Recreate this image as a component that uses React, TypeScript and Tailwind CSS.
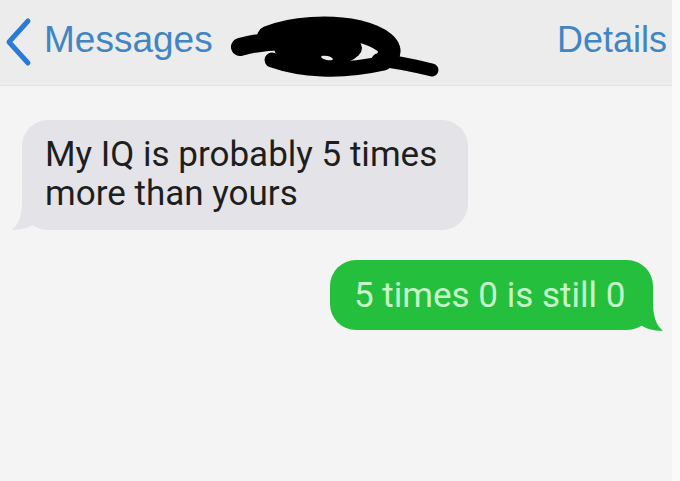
import React from "react";

const Chevron = () => (
  <svg width="34" height="86" viewBox="0 0 34 86" className="shrink-0">
    <polyline
      points="28,21 9,42 28,63"
      fill="none"
      stroke="#2b7bd6"
      strokeWidth="5"
      strokeLinecap="round"
      strokeLinejoin="round"
    />
  </svg>
);

// redaction scribble over the contact name
const Scribble = () => (
  <svg width="680" height="86" viewBox="0 0 680 86" className="absolute left-0 top-0 pointer-events-none">
    <g stroke="#000" fill="none" strokeLinecap="round" strokeLinejoin="round">
      <path d="M240 47 C 258 42, 280 40, 300 42" strokeWidth="18" />
      <path d="M268 37 C 292 27, 330 25, 358 31 C 382 37, 394 47, 388 56" strokeWidth="22" />
      <path d="M272 60 C 300 70, 340 73, 384 63" strokeWidth="15" />
      <path d="M378 60 C 398 62, 416 66, 432 70" strokeWidth="13" />
    </g>
    <ellipse cx="318" cy="48" rx="44" ry="19" fill="#000" />
    <ellipse cx="327" cy="58" rx="6" ry="2" fill="#ececec" transform="rotate(12 327 58)" />
  </svg>
);

export default function App() {
  return (
    <div className="w-[680px] h-[481px] bg-[#fafafa] flex overflow-hidden">
      <div className="w-[672px] h-full bg-[#f4f4f4] flex flex-col">
        {/* Header */}
        <header className="relative h-[86px] bg-[#ececec] border-b border-[#e2e2e2] flex justify-between items-start font-['Liberation_Sans',Arial,sans-serif]">
          <div className="flex items-start">
            <Chevron />
            <span className="ml-[10px] pt-[21px] text-[37px] leading-[37px] text-[#4186c2]">Messages</span>
          </div>
          <span className="pt-[21px] pr-[5px] text-[36px] leading-[37px] text-[#4186c2]">Details</span>
          <Scribble />
        </header>

        {/* Thread */}
        <div className="flex flex-col pt-[34px] font-['Roboto','Liberation_Sans',sans-serif]">
          <div className="ml-[22px] relative self-start">
            <svg width="30" height="30" viewBox="0 0 30 30" className="absolute -left-[10px] -bottom-[1px]">
              <path d="M10 0 C 10 14, 7 23, 0 29 C 10 29, 19 26, 26 21 L 26 0 Z" fill="#e4e4e8" />
            </svg>
            <div className="relative w-[446px] h-[110px] rounded-[26px] bg-[#e4e4e8] pl-[23px] pt-[15px] text-[35px] leading-[39px] text-[#1e1e1e]">
              My IQ is probably 5 times
              <br />
              more than yours
            </div>
          </div>

          <div className="mt-[30px] ml-[330px] relative self-start">
            <svg width="30" height="30" viewBox="0 0 30 30" className="absolute -right-[10px] -bottom-[2px]">
              <path d="M20 0 C 20 14, 23 23, 30 29 C 20 29, 11 26, 4 21 L 4 0 Z" fill="#24c03d" />
            </svg>
            <div className="relative w-[323px] h-[70px] rounded-[26px] bg-[#24c03d] pl-[24px] flex items-center text-[35px] leading-[39px] text-[#c6f5c9]">
              5 times 0 is still 0
            </div>
          </div>
        </div>
      </div>
    </div>
  );
}
